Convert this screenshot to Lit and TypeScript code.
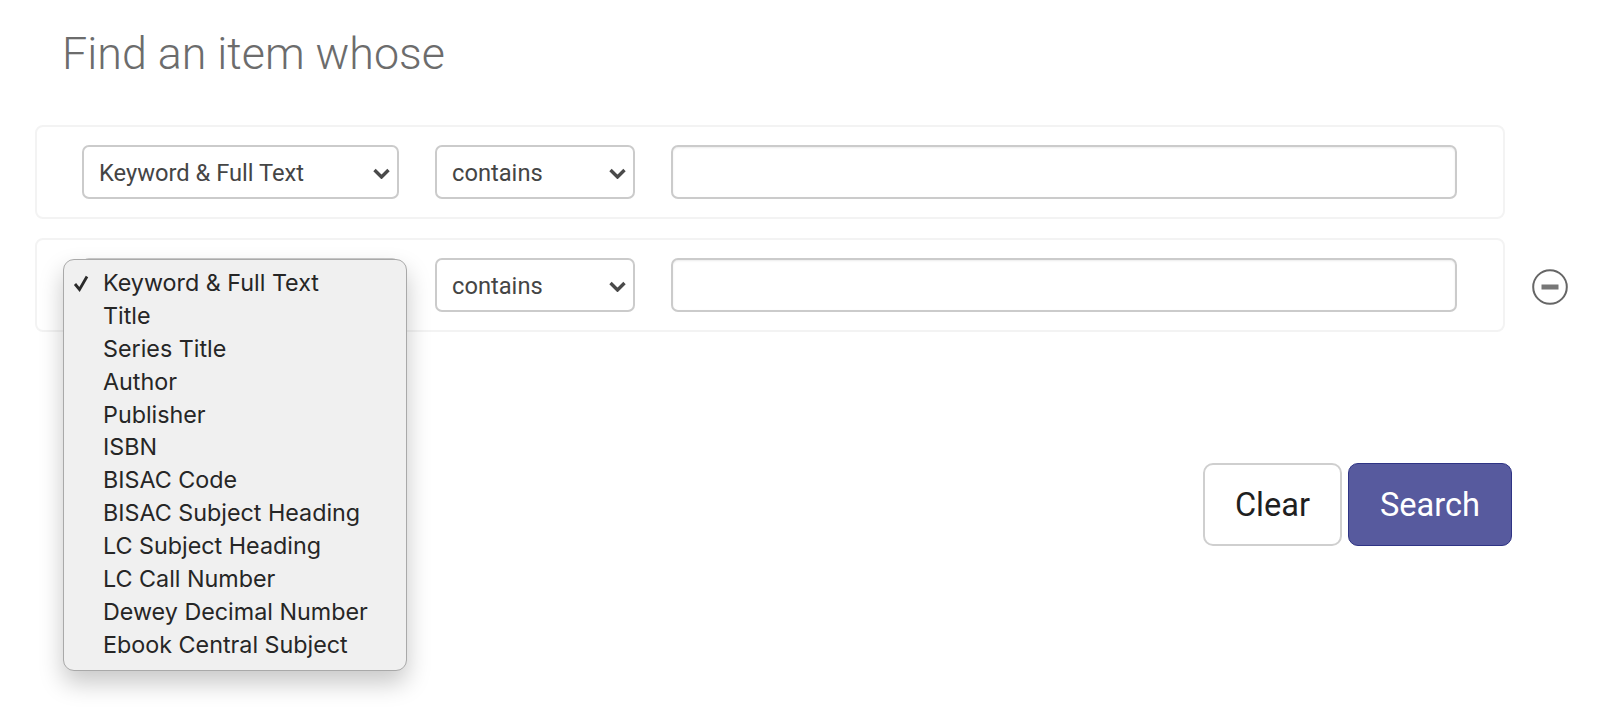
import { LitElement, html, css, svg } from "lit";
import { customElement } from "lit/decorators.js";

const OPTIONS = [
  "Keyword & Full Text", "Title", "Series Title", "Author", "Publisher", "ISBN",
  "BISAC Code", "BISAC Subject Heading", "LC Subject Heading", "LC Call Number",
  "Dewey Decimal Number", "Ebook Central Subject",
];

const chevron = svg`<path d="M1.5 2 L8.5 9 L15.5 2" fill="none" stroke="#4a4a4a" stroke-width="3.4"/>`;

@customElement("app-root")
export class AppRoot extends LitElement {
  static styles = css`
    :host {
      display: block;
      width: 1600px;
      height: 719px;
      box-sizing: border-box;
      padding: 28px 0 0 35px;
      background: #fff;
      font-family: Roboto, "Liberation Sans", sans-serif;
      overflow: hidden;
      position: relative;
    }
    h1 {
      margin: 0 0 45px 27px;
      font-size: 44.8px;
      line-height: 52px;
      font-weight: 300;
      color: #6c6c6c;
    }
    .rows { display: flex; flex-direction: column; gap: 19px; }
    .line { display: flex; align-items: center; gap: 27px; }
    .card {
      width: 1470px;
      height: 94px;
      box-sizing: border-box;
      border: 2px solid #f3f3f3;
      border-radius: 8px;
      padding: 0 45px;
      display: flex;
      align-items: center;
      gap: 36px;
      flex: none;
    }
    .select, .input {
      height: 54px;
      box-sizing: border-box;
      border: 2px solid #cbcbcb;
      border-radius: 7px;
      background: #fff;
      flex: none;
    }
    .select {
      display: flex;
      align-items: center;
      justify-content: space-between;
      padding: 2px 7px 0 15px;
      font-size: 23.7px;
      color: #454545;
    }
    .select svg { width: 17px; height: 11px; margin-left: auto; }
    .field { width: 317px; }
    .op { width: 200px; }
    .input { width: 786px; box-shadow: inset 0 1px 2px rgba(0,0,0,.08); }
    .minus { width: 36px; height: 36px; flex: none; display: block; margin-top: 3px; }
    .actions {
      display: flex;
      justify-content: flex-end;
      gap: 6px;
      width: 1477px;
      margin-top: 131px;
    }
    button {
      height: 83px;
      box-sizing: border-box;
      border-radius: 10px;
      font-family: inherit;
      font-size: 32.6px;
      padding: 0;
    }
    .clear { width: 139px; background: #fff; border: 2px solid #cfcfcf; color: #1f1f1f; }
    .search { width: 164px; background: #575a9e; border: 1px solid #2f3485; color: #fff; }
    .menu {
      position: absolute;
      left: 63px;
      top: 259px;
      width: 344px;
      height: 412px;
      box-sizing: border-box;
      padding: 7px 0;
      background: #f0f0f0;
      border: 1px solid #a9a9a9;
      border-radius: 11px;
      box-shadow: 0 12px 24px rgba(0,0,0,.22);
      font-family: Inter, "Liberation Sans", sans-serif;
      font-size: 23.3px;
      color: #262626;
    }
    .opt {
      height: 32.9px;
      line-height: 32.9px;
      padding-left: 39px;
      position: relative;
      white-space: nowrap;
    }
    .check {
      position: absolute;
      left: 9px;
      top: 8px;
      width: 17px;
      height: 17px;
    }
  `;

  private sel(cls: string, label: string) {
    return html`<div class="select ${cls}"><span>${label}</span><svg viewBox="0 0 17 11">${chevron}</svg></div>`;
  }

  private row(label: string) {
    return html`<div class="card">
      ${this.sel("field", label)}
      ${this.sel("op", "contains")}
      <div class="input"></div>
    </div>`;
  }

  render() {
    return html`
      <h1>Find an item whose</h1>
      <div class="rows">
        <div class="line">${this.row("Keyword & Full Text")}</div>
        <div class="line">
          ${this.row("")}
          <svg class="minus" viewBox="0 0 36 36">
            <circle cx="18" cy="18" r="16.8" fill="#fff" stroke="#666" stroke-width="2"/>
            <rect x="9.5" y="15.5" width="17" height="5" fill="#777"/>
          </svg>
        </div>
      </div>
      <div class="actions">
        <button class="clear">Clear</button>
        <button class="search">Search</button>
      </div>
      <div class="menu">
        ${OPTIONS.map((o, i) => html`<div class="opt">
          ${i === 0
            ? html`<svg class="check" viewBox="0 0 17 17"><path d="M2 9 L6.5 14.5 L14 1.5" fill="none" stroke="#2a2a2a" stroke-width="2.8"/></svg>`
            : ""}${o}
        </div>`)}
      </div>
    `;
  }
}
